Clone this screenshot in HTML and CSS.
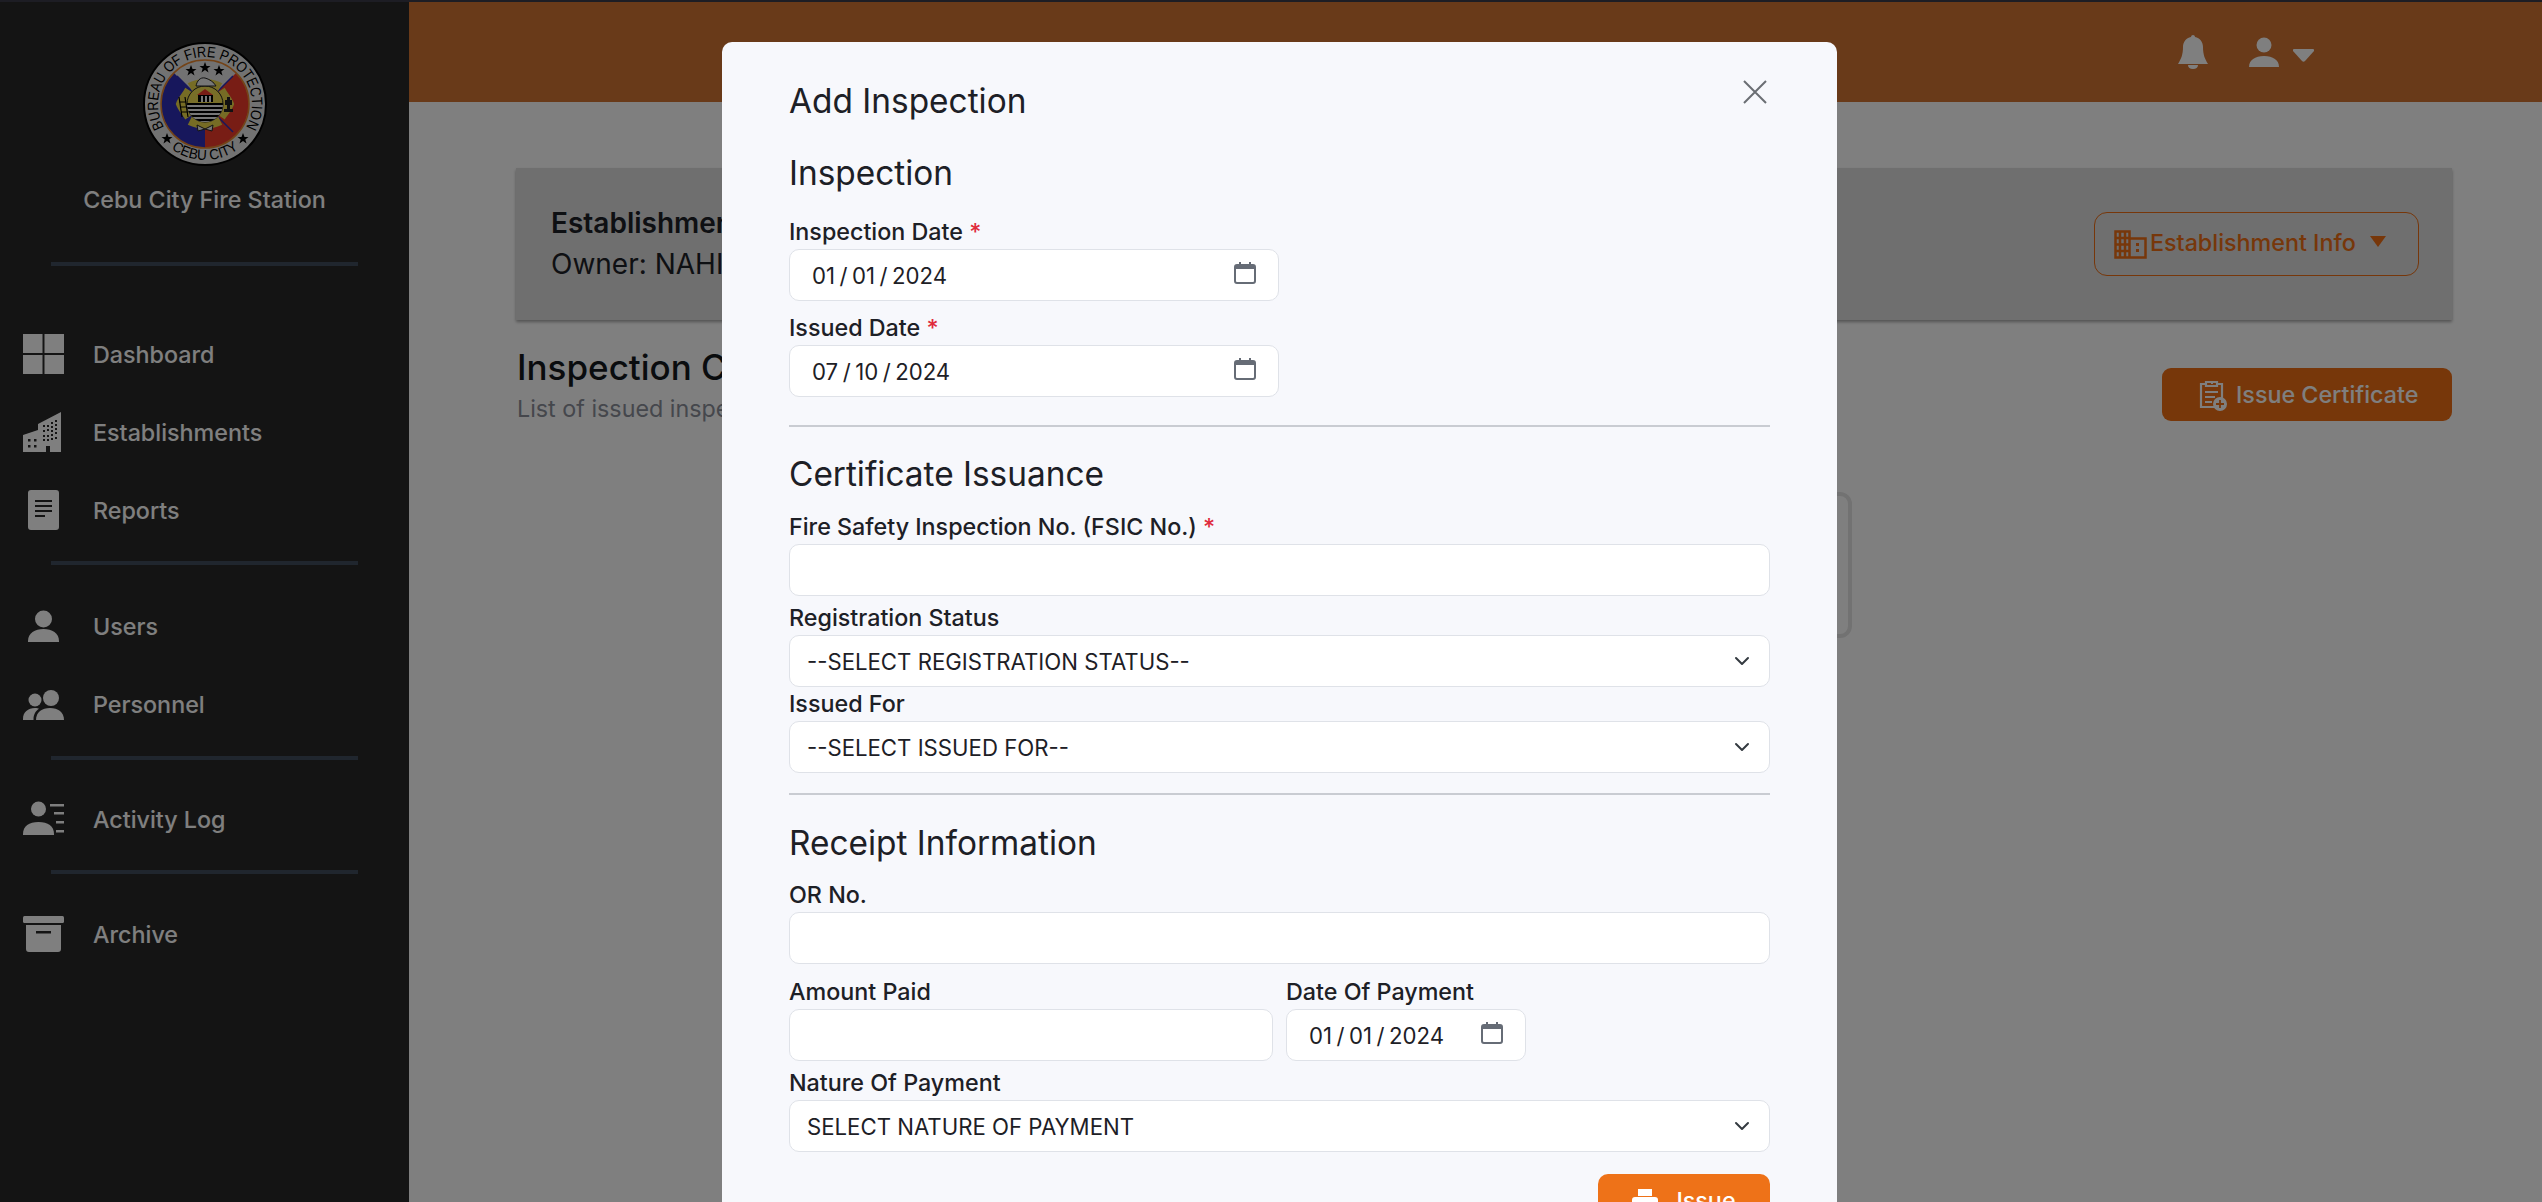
FILE: index.html
```html
<!DOCTYPE html>
<html lang="en">
<head>
<meta charset="utf-8">
<title>Add Inspection</title>
<link rel="stylesheet" href="styles.css">
</head>
<body>
<div class="topstrip"></div>
<div class="app">
  <aside class="sidebar">
    <div class="brand">
      <svg class="seal" viewBox="0 0 124 124" width="124" height="124">
        <defs>
          <path id="sealTop" d="M21.300 85.500 A47 47 0 1 1 102.700 85.500"/>
          <path id="sealBottom" d="M24.500 103.600 A56 56 0 0 0 99.500 103.600"/>
          <clipPath id="sealInner"><circle cx="62" cy="62" r="18"/></clipPath>
        </defs>
        <circle cx="62" cy="62" r="61" fill="#e4e4e4" stroke="#000" stroke-width="2"/>
        <path d="M62 106 A44 44 0 0 1 31 31 L62 62Z" fill="#2f2fb8"/>
        <path d="M62 106 A44 44 0 0 0 93 31 L62 62Z" fill="#f03a2a"/>
        <circle cx="62" cy="62" r="44" fill="none" stroke="#e8862e" stroke-width="1.500"/>
        <text class="seal-top" textLength="196" lengthAdjust="spacingAndGlyphs"><textPath href="#sealTop" startOffset="50%" text-anchor="middle">BUREAU OF FIRE PROTECTION</textPath></text>
        <text class="seal-bottom" textLength="72" lengthAdjust="spacingAndGlyphs"><textPath href="#sealBottom" startOffset="50%" text-anchor="middle">CEBU CITY</textPath></text>
        <path id="starA" d="M48 23l1.500 4h4l-3.200 2.500 1.200 4-3.500-2.400-3.500 2.400 1.200-4-3.200-2.500h4zM62 20l1.500 4h4l-3.200 2.500 1.200 4-3.500-2.400-3.500 2.400 1.200-4-3.200-2.500h4zM76 23l1.500 4h4l-3.200 2.500 1.200 4-3.500-2.400-3.500 2.400 1.200-4-3.200-2.500h4zM24 91l1.500 4h4l-3.200 2.500 1.200 4-3.500-2.400-3.500 2.400 1.200-4-3.200-2.500h4zM100 91l1.500 4h4l-3.200 2.500 1.200 4-3.500-2.400-3.500 2.400 1.200-4-3.200-2.500h4z" fill="#000"/>
        <path d="M34 34l56 56M90 34l-56 56" stroke="#2f2fb8" stroke-width="1.500"/>
        <path transform="translate(62 62) scale(.86) translate(-62 -62)" d="M62 33c8 0 14 2 20 5l-6 11 9-6c2 5 8 10 11 19-3 8-8 13-11 18l-9-6 6 12c-7 3-13 5-20 5s-13-2-20-5l6-12-9 6c-3-5-8-10-11-18 3-9 9-14 11-19l9 6-6-11c6-3 12-5 20-5z" fill="#ecd84a"/>
        <circle cx="62" cy="62" r="18" fill="#f0dc50" stroke="#222"/>
        <path d="M54 53l8-6 8 6z" fill="#f03a2a"/>
        <path d="M55 53h15v7h-15z" fill="#000"/>
        <path d="M58 54h2v6h-2zM62 54h2v6h-2zM66 54h2v6h-2z" fill="#eee"/>
        <g clip-path="url(#sealInner)">
          <path d="M44 61h36v8h-36zM44 69h36v12h-36z" fill="#eee"/>
          <path d="M44 61h36v2h-36zM44 65h36v2h-36zM44 69h36v2h-36zM44 73h36v2h-36zM44 77h36v2h-36z" fill="#000"/>
        </g>
        <path d="M36 55l3 20M42 55l3 20M36 60h7M37 65h7M38 70h7" stroke="#000" stroke-width="1.200" fill="none"/>
        <path d="M84 55h3v3h2v5h-2v4h3v3h-9v-3h3v-4h-2v-5h2z" fill="#222"/>
        <path d="M53 44c1-5 4-9 9-8 4 1 9 4 11 8z" fill="#eee" stroke="#222"/>
        <path d="M54 83l8 4 8-4-1 6-7-2-7 2z" fill="#eee" stroke="#222"/>
      </svg>
      <div class="brand-name">Cebu City Fire Station</div>
    </div>
    <div class="side-rule rule-first"></div>
    <nav class="nav-group">
      <a class="nav-item">
        <svg class="nav-icon" viewBox="0 0 41 40"><path d="M0 0h19.500v19h-19.500zM21.500 0h19.500v19h-19.500zM0 21h19.500v19h-19.500zM21.500 21h19.500v19h-19.500z"/></svg>
        <span>Dashboard</span>
      </a>
      <a class="nav-item">
        <svg class="nav-icon" viewBox="0 0 41 40"><path fill-rule="evenodd" d="M38 0v40h-11v-6h-4v6h-23v-17l15-5v-6l23-12zM20 13h2v2h-2zM24 13h2v2h-2zM28 10h2v2h-2zM32 8h2v2h-2zM24 17h2v2h-2zM28 14h2v2h-2zM32 12h2v2h-2zM20 18h2v2h-2zM28 18h2v2h-2zM32 16h2v2h-2zM20 23h2v2h-2zM24 23h2v2h-2zM28 22h2v2h-2zM32 20h2v2h-2zM20 27h2v2h-2zM24 27h2v2h-2zM28 26h2v2h-2zM32 25h2v2h-2zM5 27h2.500v2.500h-2.500zM11 27h2.500v2.500h-2.500zM5 33h2.500v2.500h-2.500zM11 33h2.500v2.500h-2.500z"/></svg>
        <span>Establishments</span>
      </a>
      <a class="nav-item">
        <svg class="nav-icon" viewBox="0 0 41 40"><path fill-rule="evenodd" d="M8 0h25a3 3 0 0 1 3 3v34a3 3 0 0 1-3 3h-25a3 3 0 0 1-3-3v-34a3 3 0 0 1 3-3zM12 10v2h17v-2zM12 15v2h17v-2zM12 20v2h17v-2zM12 25v2h10v-2z"/></svg>
        <span>Reports</span>
      </a>
    </nav>
    <div class="side-rule rule-mid"></div>
    <nav class="nav-group">
      <a class="nav-item">
        <svg class="nav-icon" viewBox="0 0 41 40"><circle cx="20.500" cy="13" r="8.500"/><path d="M5 35c0-8 7-12 15.500-12s15.500 4 15.500 12v1h-31z"/></svg>
        <span>Users</span>
      </a>
      <a class="nav-item">
        <svg class="nav-icon" viewBox="0 0 41 40"><circle cx="12" cy="16" r="6.500"/><path d="M0 35c0-7 5-11 12-11 2 0 3 .3 4 .8-3 2-5.500 5.500-5.500 10.200v1h-10.500z"/><circle cx="28" cy="14" r="8"/><path d="M13 36c0-8 6-12 14-12s14 4 14 12z"/></svg>
        <span>Personnel</span>
      </a>
    </nav>
    <div class="side-rule rule-low"></div>
    <nav class="nav-group">
      <a class="nav-item">
        <svg class="nav-icon" viewBox="0 0 41 40"><circle cx="15.500" cy="10" r="7.500"/><path d="M0 35c0-8 6-12 15.500-12s15.500 4 15.500 12v1h-31z"/><path d="M27 5h14v2.500h-14zM31 13h10v2.500h-10zM33 22h8v2.500h-8zM33 31h8v2.500h-8z"/></svg>
        <span>Activity Log</span>
      </a>
    </nav>
    <div class="side-rule rule-last"></div>
    <nav class="nav-group">
      <a class="nav-item">
        <svg class="nav-icon" viewBox="0 0 41 40"><rect x="0" y="2" width="41" height="7" rx="1.500"/><path fill-rule="evenodd" d="M3 11h35v24a3 3 0 0 1-3 3h-29a3 3 0 0 1-3-3zM13 17v2.500h15v-2.500z"/></svg>
        <span>Archive</span>
      </a>
    </nav>
  </aside>
  <div class="main">
    <header class="topbar">
      <svg class="bell" viewBox="0 0 30 34"><path d="M15 0c1 0 2 .8 2 2 5 1 8 5 8 10 0 8 2 12 5 17h-30c3-5 5-9 5-17 0-5 3-9 8-10 0-1.200 1-2 2-2zM10 30h10c0 2.500-2 4-5 4s-5-1.500-5-4z"/></svg>
      <svg class="person" viewBox="0 0 30 30"><circle cx="15" cy="8" r="7.500"/><path d="M0 30c0-7 6-11 15-11s15 4 15 11z"/></svg>
      <svg class="caret" viewBox="0 0 21 13"><path d="M1 0h19c1 0 1.500 1 1 2l-9 10c-1 1-2 1-3 0l-9-10c-.5-1 0-2 1-2z"/></svg>
    </header>
    <section class="content">
      <div class="est-card">
        <div class="est-info">
          <div class="est-name">Establishment Name</div>
          <div class="est-owner">Owner: NAHIDA</div>
        </div>
        <button class="btn-outline">
          <svg class="btn-outline-icon" viewBox="0 0 33 29"><path fill="none" stroke="currentColor" stroke-width="2.500" d="M1.500 1.500h14v26h-14zM15.500 8.500h16v19h-16zM1.500 8h14M1.500 14.500h14M1.500 21h14M6 1.500v26M11 1.500v26"/><path d="M22 13h3v3h-3zM22 19h3v3h-3z" fill="currentColor"/></svg>
          <span class="btn-outline-text">Establishment Info</span>
          <svg class="btn-caret" viewBox="0 0 16 11"><path d="M0 0h16l-8 11z" fill="currentColor"/></svg>
        </button>
      </div>
      <div class="list-head">
        <div>
          <h2 class="list-title">Inspection Certificates</h2>
          <p class="list-sub">List of issued inspection certificates</p>
        </div>
        <button class="btn-issue">
          <svg class="issue-icon" viewBox="0 0 29 31"><path fill="none" stroke="currentColor" stroke-width="2.200" d="M8 4h-5v23h14M19 4h5v14M8 2h11v4h-11zM7 12h13M7 17h10M7 22h7"/><path d="M13 2h2v2h-2z" fill="currentColor"/><circle cx="22" cy="24" r="7" fill="currentColor"/><path d="M22 20v8M18 24h8" stroke="#ee6e14" stroke-width="1.800"/></svg>
          <span>Issue Certificate</span>
        </button>
      </div>
      <div class="empty-box"></div>
    </section>
  </div>
</div>
<div class="backdrop">
  <div class="modal">
    <div class="modal-head">
      <h1 class="modal-title">Add Inspection</h1>
      <button class="modal-close" aria-label="Close">
        <svg viewBox="0 0 24 24" width="24" height="24"><path d="M1 1l22 22M23 1l-22 22" fill="none" stroke="currentColor" stroke-width="2"/></svg>
      </button>
    </div>
    <form class="modal-form">
      <h3 class="section-title first">Inspection</h3>
      <label class="field-label gap-21">Inspection Date <em>*</em></label>
      <div class="date-wrap">
        <input class="control date" type="date" value="2024-01-01">
        <svg class="cal" viewBox="0 0 22 22"><path fill-rule="evenodd" d="M5 0h2v2h8v-2h2v2h2a3 3 0 0 1 3 3v14a3 3 0 0 1-3 3h-16a3 3 0 0 1-3-3v-14a3 3 0 0 1 3-3h2zM2 7v12a1 1 0 0 0 1 1h16a1 1 0 0 0 1-1v-12z"/></svg>
      </div>
      <label class="field-label gap-11">Issued Date <em>*</em></label>
      <div class="date-wrap">
        <input class="control date" type="date" value="2024-07-10">
        <svg class="cal" viewBox="0 0 22 22"><path fill-rule="evenodd" d="M5 0h2v2h8v-2h2v2h2a3 3 0 0 1 3 3v14a3 3 0 0 1-3 3h-16a3 3 0 0 1-3-3v-14a3 3 0 0 1 3-3h2zM2 7v12a1 1 0 0 0 1 1h16a1 1 0 0 0 1-1v-12z"/></svg>
      </div>
      <hr class="divider">
      <h3 class="section-title">Certificate Issuance</h3>
      <label class="field-label gap-15">Fire Safety Inspection No. (FSIC No.) <em>*</em></label>
      <input class="control" type="text">
      <label class="field-label gap-6">Registration Status</label>
      <div class="select-wrap">
        <select class="control select"><option>--SELECT REGISTRATION STATUS--</option></select>
        <svg class="chevron" viewBox="0 0 16 16"><path d="M2 5l6 6 6-6" fill="none" stroke="currentColor" stroke-width="2" stroke-linecap="round" stroke-linejoin="round"/></svg>
      </div>
      <label class="field-label gap-1">Issued For</label>
      <div class="select-wrap">
        <select class="control select"><option>--SELECT ISSUED FOR--</option></select>
        <svg class="chevron" viewBox="0 0 16 16"><path d="M2 5l6 6 6-6" fill="none" stroke="currentColor" stroke-width="2" stroke-linecap="round" stroke-linejoin="round"/></svg>
      </div>
      <hr class="divider divider-2">
      <h3 class="section-title">Receipt Information</h3>
      <label class="field-label gap-14">OR No.</label>
      <input class="control" type="text">
      <div class="pay-row">
        <div class="pay-amount">
          <label class="field-label">Amount Paid</label>
          <input class="control" type="text">
        </div>
        <div class="pay-date">
          <label class="field-label">Date Of Payment</label>
          <div class="date-wrap">
            <input class="control date" type="date" value="2024-01-01">
            <svg class="cal" viewBox="0 0 22 22"><path fill-rule="evenodd" d="M5 0h2v2h8v-2h2v2h2a3 3 0 0 1 3 3v14a3 3 0 0 1-3 3h-16a3 3 0 0 1-3-3v-14a3 3 0 0 1 3-3h2zM2 7v12a1 1 0 0 0 1 1h16a1 1 0 0 0 1-1v-12z"/></svg>
          </div>
        </div>
      </div>
      <label class="field-label gap-6">Nature Of Payment</label>
      <div class="select-wrap">
        <select class="control select"><option>SELECT NATURE OF PAYMENT</option></select>
        <svg class="chevron" viewBox="0 0 16 16"><path d="M2 5l6 6 6-6" fill="none" stroke="currentColor" stroke-width="2" stroke-linecap="round" stroke-linejoin="round"/></svg>
      </div>
      <div class="form-actions">
        <button class="btn-submit" type="button">
          <svg class="print-icon" viewBox="0 0 26 24"><path d="M6 0h14v7h-14zM3 8h20a3 3 0 0 1 3 3v8h-5v-4h-16v4h-5v-8a3 3 0 0 1 3-3zM7 17h12v7h-12z" fill="currentColor"/></svg>
          <span>Issue</span>
        </button>
      </div>
    </form>
  </div>
</div>
</body>
</html>
```
FILE: styles.css
```css
* { box-sizing: border-box; }
html, body { margin: 0; height: 100%; overflow: hidden; }
body { font-family: Inter, "Liberation Sans", sans-serif; color: #1d2026; background: #fff; }

.topstrip { height: 2px; background: #3a3a48; }
.app { display: flex; height: 1200px; }

/* Sidebar */
.sidebar { width: 409px; flex: none; background: #282828; color: #fff; }
.brand { display: flex; flex-direction: column; align-items: center; padding-top: 40px; }
.seal { display: block; }
.seal-top { font: 400 15px "Liberation Sans", sans-serif; fill: #000; }
.seal-bottom { font: 400 14.500px "Liberation Sans", sans-serif; fill: #000; }
.brand-name { margin-top: 20px; font-size: 23.300px; font-weight: 500; line-height: 28px; }
.side-rule { height: 4px; margin-left: 51px; width: 307px; background: #414c5c; }
.rule-first { margin-top: 48px; }
.rule-mid { margin-top: 12px; }
.rule-low { margin-top: 13px; }
.rule-last { margin-top: 12px; }
.nav-group { display: flex; flex-direction: column; }
.rule-first + .nav-group { margin-top: 49px; }
.rule-mid + .nav-group { margin-top: 22px; }
.rule-low + .nav-group { margin-top: 20px; }
.rule-last + .nav-group { margin-top: 21px; }
.nav-item { display: flex; align-items: center; height: 78px; padding-left: 23px; gap: 29px; font-size: 23.300px; font-weight: 500; color: #fff; }
.nav-icon { width: 41px; height: 40px; fill: #fff; flex: none; }

/* Main */
.main { flex: 1; min-width: 0; display: flex; flex-direction: column; }
.topbar { height: 100px; flex: none; background: #d27432; display: flex; align-items: flex-start; color: #fff; padding-left: 1769px; }
.bell { width: 30px; height: 34px; fill: #fff; margin-top: 33px; }
.person { width: 30px; height: 30px; fill: #fff; margin: 35px 0 0 41px; }
.caret { width: 21px; height: 13px; fill: #fff; margin: 47px 0 0 14px; }
.content { padding: 66px 90px 0 107px; position: relative; flex: 1; background: #fff; }
.est-card { height: 152px; background: #dedede; box-shadow: 0 2px 3px rgba(0,0,0,.35); display: flex; align-items: flex-start; justify-content: space-between; padding: 37px 33px 0 35px; }
.est-name { font-size: 28px; font-weight: 600; line-height: 36px; color: #1d2026; }
.est-owner { margin-top: 3px; font-size: 28px; line-height: 40px; color: #1d2026; }
.btn-outline { margin-top: 7px; width: 325px; height: 64px; border: 1.5px solid #ee6e14; border-radius: 13px; background: transparent; color: #ee6e14; font: 500 23.300px Inter, sans-serif; display: flex; align-items: center; padding: 0 0 0 19px; }
.btn-outline-icon { width: 33px; height: 29px; flex: none; margin-right: 3px; }
.btn-outline-text { margin-bottom: 4px; }
.btn-caret { width: 16px; height: 11px; margin-left: 14px; margin-bottom: 5px; }
.list-head { display: flex; justify-content: space-between; align-items: flex-start; margin-top: 24px; padding-left: 1px; }
.list-title { margin: 0; font-size: 35px; font-weight: 500; line-height: 46px; color: #15181d; }
.list-sub { margin: 5px 0 0; font-size: 23.300px; line-height: 28px; color: #8a8e99; }
.btn-issue { margin-top: 24px; width: 290px; height: 53px; border: 0; border-radius: 9px; background: #ee6e14; color: #fff; font: 500 23.300px Inter, sans-serif; display: flex; align-items: center; padding-left: 36px; gap: 9px; }
.issue-icon { width: 29px; height: 31px; flex: none; margin-top: 2px; }
.empty-box { margin: 69px 0 0 600px; width: 736px; height: 146px; border: 4px solid #e4e4e4; border-radius: 12px; }

/* Modal */
.backdrop { position: fixed; inset: 0; background: rgba(0,0,0,.5); }
.modal { position: absolute; left: 722px; top: 42px; width: 1115px; min-height: 1300px; background: #f7f8fc; border-radius: 10px; padding: 39px 67px 0 67px; }
.modal-head { display: flex; justify-content: space-between; align-items: flex-start; }
.modal-title { margin: 0; font-size: 33.400px; font-weight: 400; line-height: 40px; color: #1d2026; }
.modal-close { background: none; border: 0; padding: 0; margin: -1px 3px 0 0; color: #6a6e73; width: 24px; height: 24px; }
.modal-form { display: flex; flex-direction: column; }
.section-title { margin: 0; font-size: 33.400px; font-weight: 400; line-height: 44px; color: #1d2026; }
.section-title.first { margin-top: 30px; }
.field-label { display: block; height: 33px; line-height: 32px; font-size: 23.300px; font-weight: 500; color: #1d2026; }
.field-label em { font-style: normal; color: #e02b3c; }
.gap-1 { margin-top: 1px; }
.gap-6 { margin-top: 6px; }
.gap-11 { margin-top: 11px; }
.gap-14 { margin-top: 14px; }
.gap-15 { margin-top: 15px; }
.gap-21 { margin-top: 21px; }
.control { display: block; width: 100%; height: 52px; border: 1.5px solid #dfe2e8; border-radius: 10px; background: #fff; font: 400 22.200px Inter, sans-serif; color: #1d2026; padding: 0 21px; outline: none; }
.control.date::-webkit-calendar-picker-indicator { display: none; }
.control.date::-webkit-datetime-edit-text { padding: 0 3.500px; }
.date-wrap { position: relative; width: 490px; }
.cal { position: absolute; right: 23px; top: 13px; width: 22px; height: 22px; fill: #666c76; }
.select { appearance: none; padding: 0 50px 0 17px; }
.select-wrap { position: relative; }
.chevron { position: absolute; right: 20px; top: 18px; width: 16px; height: 16px; color: #343a40; }
.divider { width: 100%; margin: 28px 0 25px; border: 0; border-top: 2px solid #c9ccd2; }
.divider-2 { margin: 20px 0 26px; }
.pay-row { display: flex; gap: 13px; margin-top: 12px; }
.pay-amount { width: 484px; flex: none; }
.pay-date { width: 240px; flex: none; }
.pay-date .date-wrap { width: 240px; }
.form-actions { display: flex; justify-content: flex-end; margin-top: 22px; }
.btn-submit { width: 172px; height: 53px; border: 0; border-radius: 10px; background: #ee7218; color: #fff; font: 500 23.300px Inter, sans-serif; display: flex; align-items: center; justify-content: center; gap: 18px; }
.print-icon { width: 26px; height: 24px; }
```
